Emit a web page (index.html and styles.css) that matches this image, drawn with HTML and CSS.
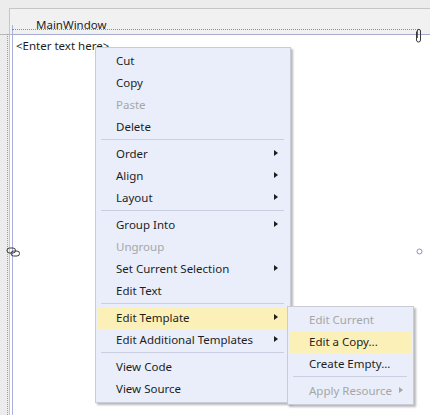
FILE: index.html
```html
<!DOCTYPE html>
<html>
<head>
<meta charset="utf-8">
<link rel="stylesheet" href="styles.css">
</head>
<body>
<div class="canvas">
  <div class="window">
    <div class="titlebar"><span class="title">MainWindow</span></div>
    <div class="content"><span class="textbox">&lt;Enter text here&gt;</span></div>
  </div>

  <div class="adorn tick"></div>
  <div class="adorn vdots"></div>
  <div class="adorn vblue"></div>
  <div class="adorn hdots"></div>
  <svg class="adorn pin" width="8" height="16" viewBox="0 0 8 16">
    <path d="M2.5 3.5 V12 a2 2 0 0 0 4 0 V3 a1.6 1.6 0 0 0 -3.2 0 V10" fill="none" stroke="#3a3a3a" stroke-width="1"/>
  </svg>
  <svg class="adorn link" width="15" height="10" viewBox="0 0 15 10">
    <rect x="1" y="1" width="8.5" height="5" rx="2.5" fill="none" stroke="#3a3a3a" stroke-width="1"/>
    <rect x="5" y="4" width="8.5" height="5" rx="2.5" fill="none" stroke="#3a3a3a" stroke-width="1"/>
  </svg>
  <svg class="adorn ring" width="7" height="7" viewBox="0 0 7 7">
    <circle cx="3.5" cy="3.5" r="2.5" fill="none" stroke="#8c8fc6" stroke-width="1"/>
  </svg>

  <div class="menu main-menu">
    <div class="item">Cut</div>
    <div class="item">Copy</div>
    <div class="item disabled">Paste</div>
    <div class="item">Delete</div>
    <div class="sep"></div>
    <div class="item sub">Order<span class="arrow"></span></div>
    <div class="item sub">Align<span class="arrow"></span></div>
    <div class="item sub">Layout<span class="arrow"></span></div>
    <div class="sep"></div>
    <div class="item sub">Group Into<span class="arrow"></span></div>
    <div class="item disabled">Ungroup</div>
    <div class="item sub">Set Current Selection<span class="arrow"></span></div>
    <div class="item">Edit Text</div>
    <div class="sep"></div>
    <div class="item sub hot">Edit Template<span class="arrow"></span></div>
    <div class="item sub">Edit Additional Templates<span class="arrow"></span></div>
    <div class="sep"></div>
    <div class="item">View Code</div>
    <div class="item">View Source</div>
  </div>

  <div class="menu sub-menu">
    <div class="item disabled">Edit Current</div>
    <div class="item hot">Edit a Copy...</div>
    <div class="item">Create Empty...</div>
    <div class="sep"></div>
    <div class="item sub disabled">Apply Resource<span class="arrow"></span></div>
  </div>
</div>
</body>
</html>
```

FILE: styles.css
```css
html, body {
  margin: 0;
  padding: 0;
}

body {
  font-family: "Noto Sans", "Open Sans", sans-serif;
  font-size: 11.5px;
  color: #1e1e1e;
}

.canvas {
  position: relative;
  width: 430px;
  height: 415px;
  overflow: hidden;
  box-sizing: border-box;
  padding: 8px 0 0 9px;
  background: #ececec;
  display: flex;
  flex-direction: column;
}

.window {
  flex: 1;
  display: flex;
  flex-direction: column;
  border-top: 1px solid #c6c6c6;
  border-left: 1px solid #c6c6c6;
}

.titlebar {
  height: 25px;
  background: #f1f1f1;
  display: flex;
  align-items: flex-end;
  padding-left: 26px;
}

.title {
  line-height: 16px;
  padding-bottom: 1px;
  color: #1e1e1e;
}

.content {
  flex: 1;
  background: #ffffff;
  border-top: 1px solid #a5acd0;
  padding: 3px 0 0 6px;
}

.textbox {
  line-height: 16px;
}

.adorn {
  position: absolute;
}

.tick {
  left: 0;
  top: 34px;
  width: 12px;
  height: 1px;
  background: #b8b8b8;
}

.vdots {
  left: 7px;
  top: 34px;
  bottom: 0;
  border-left: 1px dotted #98a0a0;
}

.vblue {
  left: 12px;
  top: 25px;
  bottom: 0;
  width: 1px;
  background: #a9b1dc;
}

.hdots {
  left: 12px;
  top: 29px;
  width: 406px;
  border-top: 1px dotted #8088c8;
}

.pin {
  left: 414px;
  top: 28px;
}

.link {
  left: 6px;
  top: 247px;
}

.ring {
  left: 416px;
  top: 248px;
}

.menu {
  position: absolute;
  box-sizing: border-box;
  background: #e9eefa;
  border: 1px solid #c9ccd6;
  padding: 2px 0;
  box-shadow: 2px 2px 2px rgba(0, 0, 0, 0.28);
}

.main-menu {
  left: 95px;
  top: 47px;
  width: 196px;
}

.sub-menu {
  left: 287px;
  top: 306px;
  width: 127px;
}

.item {
  position: relative;
  height: 22px;
  line-height: 22px;
  margin: 0 2px;
  padding-left: 18px;
  white-space: nowrap;
}

.sub-menu .item {
  padding-left: 19px;
}

.item.disabled {
  color: #a6a6a6;
}

.item.hot {
  background: #fcf0b9;
}

.arrow {
  position: absolute;
  right: 10px;
  top: 7px;
  width: 0;
  height: 0;
  border-top: 3.5px solid transparent;
  border-bottom: 3.5px solid transparent;
  border-left: 4px solid #1e1e1e;
}

.sub-menu .arrow {
  right: 8px;
}

.item.disabled .arrow {
  border-left-color: #a6a6a6;
}

.sep {
  height: 5px;
  box-sizing: border-box;
  padding-top: 1px;
  margin: 0 6px 0 5px;
}

.sep::after {
  content: "";
  display: block;
  height: 1px;
  background: #c9cfe0;
}
```
